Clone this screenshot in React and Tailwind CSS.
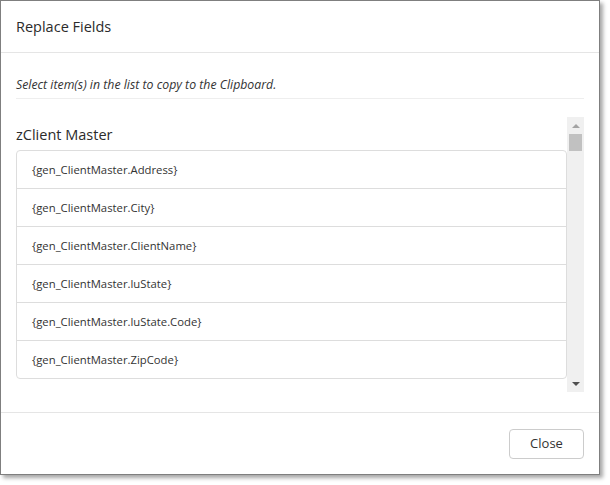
import React from 'react'

const FIELDS = [
  '{gen_ClientMaster.Address}',
  '{gen_ClientMaster.City}',
  '{gen_ClientMaster.ClientName}',
  '{gen_ClientMaster.luState}',
  '{gen_ClientMaster.luState.Code}',
  '{gen_ClientMaster.ZipCode}',
]

function ScrollBar() {
  return (
    <div className="flex w-[17px] shrink-0 flex-col bg-[#f0f0f0]">
      <div className="flex h-[17px] items-center justify-center">
        <div className="h-0 w-0 border-x-[4px] border-b-[4px] border-x-transparent border-b-[#a3a3a3]" />
      </div>
      <div className="mx-[2px] h-[17px] bg-[#c1c1c1]" />
      <div className="flex-1" />
      <div className="flex h-[17px] items-center justify-center">
        <div className="h-0 w-0 border-x-[4px] border-t-[4px] border-x-transparent border-t-[#505050]" />
      </div>
    </div>
  )
}

export default function App() {
  return (
    <div className="min-h-screen bg-white font-['Open_Sans','Noto_Sans',sans-serif] text-[#333]">
      <div className="flex h-[475px] w-[600px] flex-col border border-[#7f7f7f] bg-white shadow-[3px_3px_4px_rgba(0,0,0,0.35)]">
        <div className="flex h-[52px] shrink-0 items-center border-b border-[#e5e5e5] pl-[15px] pt-[2px]">
          <h1 className="text-[14.5px] font-medium leading-none text-[#2b2b2b]">Replace Fields</h1>
        </div>

        <div className="flex flex-1 flex-col px-[15px]">
          <p className="mt-[23px] text-[12.3px] leading-[18px] italic">
            Select item(s) in the list to copy to the Clipboard.
          </p>
          <div className="mt-[4px] border-t border-[#eeeeee]" />

          <div className="mt-[18px] flex h-[275px]">
            <div className="flex-1 overflow-hidden">
              <div className="flex h-[33px] items-center pt-[3px]">
                <h2 className="text-[14.5px] font-medium leading-none text-[#2b2b2b]">zClient Master</h2>
              </div>
              <ul className="divide-y divide-[#dddddd] rounded-[4px] border border-[#dddddd]">
                {FIELDS.map(f => (
                  <li key={f} className="box-content flex h-[36px] items-center px-[15px] pt-[1px] text-[11.3px]">
                    {f}
                  </li>
                ))}
              </ul>
            </div>
            <ScrollBar />
          </div>
        </div>

        <div className="flex h-[62px] shrink-0 items-center justify-end border-t border-[#e5e5e5] pr-[15px]">
          <button className="h-[30px] w-[75px] rounded-[4px] border border-[#cccccc] bg-white text-[13px]">
            Close
          </button>
        </div>
      </div>
    </div>
  )
}
